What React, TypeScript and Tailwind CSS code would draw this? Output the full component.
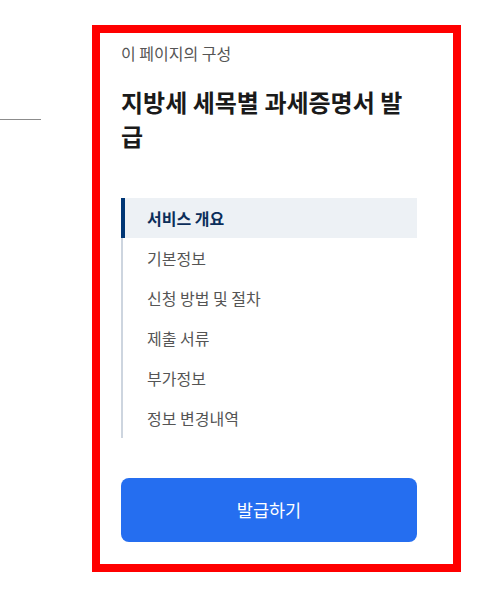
const navItems = [
  "서비스 개요",
  "기본정보",
  "신청 방법 및 절차",
  "제출 서류",
  "부가정보",
  "정보 변경내역",
];

export default function App() {
  return (
    <div
      className="flex items-start bg-white pt-[25px] h-[604px]"
      style={{ fontFamily: '"Noto Sans CJK KR", "Noto Sans", sans-serif' }}
    >
      {/* left rule */}
      <div className="mt-[94px] h-px w-[41px] bg-[#8c8c8c]" />

      {/* page outline panel */}
      <div className="ml-[51px] w-[369px] h-[547px] border-[8px] border-[#ff0000] bg-white pl-[21px] pt-[8px]">
        <p className="text-[16px] leading-[24px] text-[#555555]">이 페이지의 구성</p>
        <h2 className="mt-[20px] w-[296px] text-[24px] leading-[34px] font-bold text-[#1a1a1a]">
          지방세 세목별 과세증명서 발급
        </h2>

        <ul className="mt-[45px] w-[296px] border-l-2 border-[#cdd5df]">
          {navItems.map((item, i) => (
            <li
              key={item}
              className={
                i === 0
                  ? "-ml-[2px] h-[40px] flex items-center border-l-4 border-[#003675] bg-[#edf1f5] pl-[22px] text-[16px] font-bold text-[#0b2e5a]"
                  : "h-[40px] flex items-center pl-[24px] text-[16px] text-[#555555]"
              }
            >
              {item}
            </li>
          ))}
        </ul>

        <button className="mt-[40px] w-[296px] h-[64px] rounded-[8px] bg-[#256ef0] text-[17.5px] text-white">
          발급하기
        </button>
      </div>
    </div>
  );
}
